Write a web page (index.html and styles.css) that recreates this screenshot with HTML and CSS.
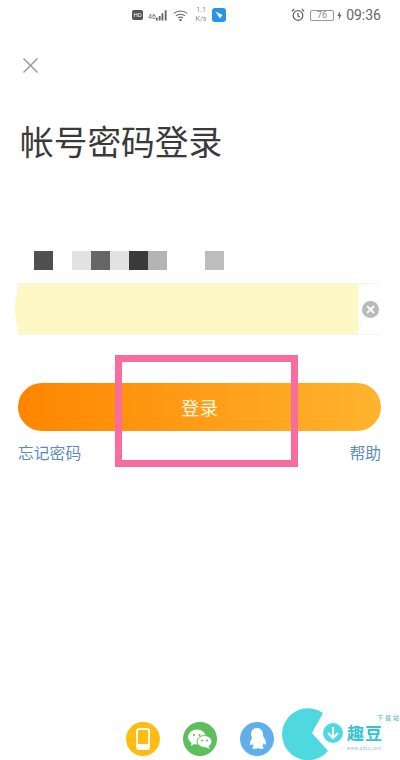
FILE: index.html
```html
<!doctype html>
<html lang="zh-CN">
<head>
    <meta charset="utf-8">
    <title>帐号密码登录</title>
    <link rel="stylesheet" href="styles.css">
</head>
<body>
<main class="page">
    <div class="status">
        <div class="status-left">
            <span class="hd">HD</span>
            <span class="net">46</span>
            <svg class="signal" width="13" height="12" viewBox="0 0 14 12"><path d="M1 9h2v3H1zM4 7h2v5H4zM7 4h2v8H7zM10.500 1h2v11h-2z" fill="#666"/></svg>
            <svg class="wifi" width="15" height="13" viewBox="0 0 18 14" fill="none" stroke="#666" stroke-width="1.300"><path d="M1 4.500c4.500-4 11.500-4 16 0M3.500 7.500c3-2.700 8-2.700 11 0M6 10.200c1.700-1.400 4.300-1.400 6 0"/><circle cx="9" cy="12.500" r=".8" fill="#666"/></svg>
            <span class="speed">1.1<br>K/s</span>
            <svg class="app" width="14" height="14" viewBox="0 0 14 14"><rect width="14" height="14" rx="3" fill="#2a94e8"/><path d="M3.500 3.500l7 3.500-2.500 3.500z" fill="#fff"/></svg>
        </div>
        <div class="status-right">
            <svg class="alarm" width="14" height="14" viewBox="0 0 14 14" fill="none" stroke="#666" stroke-width="1.300"><circle cx="7" cy="7.500" r="4.800"/><path d="M7 5v3l2 1M1 3.200L3.200 1M13 3.200L10.800 1"/></svg>
            <span class="battery">76</span>
            <svg class="bolt" width="5" height="9" viewBox="0 0 6 10"><path d="M3.500 0L.5 5.500h2L2 10l3.500-6h-2z" fill="#666"/></svg>
            <span class="clock">09:36</span>
        </div>
    </div>

    <svg class="close" width="15" height="15" viewBox="0 0 15 15" fill="none" stroke="#9a9a9a" stroke-width="1.500"><path d="M.5.500l14 14M14.500.500l-14 14"/></svg>

    <h1 class="title">帐号密码登录</h1>

    <div class="masked">
        <span class="px px-dark"></span>
        <span class="px px-none"></span>
        <span class="px px-pale"></span>
        <span class="px px-mid"></span>
        <span class="px px-pale"></span>
        <span class="px px-black"></span>
        <span class="px px-grey"></span>
        <span class="px px-none"></span>
        <span class="px px-none"></span>
        <span class="px px-soft"></span>
    </div>

    <div class="field">
        <div class="field-fill"></div>
        <svg class="clear" width="17" height="17" viewBox="0 0 17 17"><circle cx="8.500" cy="8.500" r="8.500" fill="#b9b9b9"/><path d="M5 5l7 7M12 5l-7 7" stroke="#fff" stroke-width="1.800"/></svg>
    </div>

    <button class="login">登录</button>

    <div class="links">
        <span>忘记密码</span>
        <span>帮助</span>
    </div>

    <div class="socials">
        <span class="social social-phone">
            <svg width="14" height="22" viewBox="0 0 14 22"><rect x="1" y="1" width="12" height="20" rx="2" fill="none" stroke="#fff" stroke-width="1.800"/><path d="M1 16h12v3a2 2 0 0 1-2 2H3a2 2 0 0 1-2-2z" fill="#fff"/></svg>
        </span>
        <span class="social social-wechat">
            <svg width="24" height="20" viewBox="0 0 24 20"><ellipse cx="9" cy="8" rx="9" ry="7.500" fill="#fff"/><path d="M4 12l-1 5 5-3z" fill="#fff"/><ellipse cx="16.500" cy="12.500" rx="7.500" ry="6" fill="#fff" stroke="#5cbf5c"/><path d="M20 16l2 4-5-2z" fill="#fff"/><circle cx="6" cy="6" r="1.100" fill="#5cbf5c"/><circle cx="11.500" cy="6" r="1.100" fill="#5cbf5c"/><circle cx="14" cy="11.500" r="1" fill="#5cbf5c"/><circle cx="19" cy="11.500" r="1" fill="#5cbf5c"/></svg>
        </span>
        <span class="social social-qq">
            <svg width="20" height="22" viewBox="0 0 20 22"><path d="M10 0c4 0 6 3 6 7 0 1 .5 2 1.500 3.500 1.500 2.500 2 5 1 6-.7.500-1.500-.5-2-1.500 0 1.500-.8 2.500-1.500 3.200 1.500.5 2 1.300 1.500 2-.5.800-3 .8-4.500.3-.8-.3-1.200-.3-2 0-1.500.5-4 .5-4.500-.3-.5-.7 0-1.500 1.500-2C6.300 18 5.500 17 5.500 15.500c-.5 1-1.300 2-2 1.500-1-1-.5-3.500 1-6C5.500 9 4 8 4 7c0-4 2-7 6-7z" fill="#fff"/></svg>
        </span>
    </div>

    <div class="frame"></div>

    <div class="mark">
        <svg class="mark-pac" width="54" height="54" viewBox="0 0 54 54"><path d="M41 6A26 26 0 1 0 46 44L30 26z" fill="#4fd8e0"/></svg>
        <svg class="mark-arrow" width="20" height="20" viewBox="0 0 20 20"><circle cx="10" cy="10" r="10" fill="#4fd8e0"/><path d="M10 4v11M5 10l5 5 5-5" fill="none" stroke="#fff" stroke-width="2"/></svg>
        <span class="mark-name">趣豆</span>
        <span class="mark-sub">下载站</span>
        <span class="mark-url">www.qdxz.com</span>
    </div>
</main>
</body>
</html>
```

FILE: styles.css
```css
* {
    box-sizing: border-box;
}

html, body {
    margin: 0;
    background: #fff;
}

.page {
    position: relative;
    width: 400px;
    height: 760px;
    overflow: hidden;
    padding: 0 19px 0 18px;
    font-family: "Noto Sans CJK SC", "Liberation Sans", sans-serif;
    color: #333;
}

/* status bar */
.status {
    display: flex;
    justify-content: space-between;
    align-items: center;
    height: 30px;
    margin-left: 114px;
    color: #666;
    font-family: Roboto, sans-serif;
}

.status-left, .status-right {
    display: flex;
    align-items: center;
}

.hd {
    width: 11px;
    height: 10px;
    margin-right: 5px;
    border-radius: 2px;
    background: #555;
    color: #fff;
    font-size: 6px;
    line-height: 10px;
    text-align: center;
}

.net {
    width: 7px;
    align-self: flex-start;
    margin: 7px 0 0;
    font-size: 7px;
    line-height: 8px;
}

.signal {
    margin-right: 5px;
}

.speed {
    width: 16px;
    margin: 0 3px 0 5px;
    font-size: 7px;
    line-height: 9px;
    text-align: center;
    color: #888;
}

.battery {
    width: 24px;
    height: 11px;
    margin: 0 3px 0 5px;
    border: 1px solid #999;
    border-radius: 2px;
    color: #888;
    font-size: 9px;
    line-height: 9px;
    text-align: center;
}

.bolt {
    margin-right: 4px;
}

.clock {
    font-size: 14px;
    color: #666;
}

.close {
    display: block;
    margin: 28px 0 0 5px;
}

.title {
    margin: 48px 0 0 2px;
    font-size: 33.700px;
    font-weight: 400;
    line-height: 40px;
    color: #3a3a3a;
}

/* the account name is pixelated in the source */
.masked {
    display: flex;
    margin: 90px 0 0 16px;
}

.px {
    width: 19px;
    height: 19px;
}

.px-dark { background: #505050; }
.px-pale { background: #e2e2e2; }
.px-mid { background: #666; }
.px-black { background: #3a3a3a; }
.px-grey { background: #b4b4b4; }
.px-soft { background: #bdbdbd; }

.field {
    display: flex;
    align-items: center;
    height: 52px;
    margin-top: 13px;
    border-top: 1px solid #f3f3f3;
    border-bottom: 1px solid #f3f3f3;
}

.field-fill {
    position: relative;
    width: 340px;
    height: 100%;
    background: #fef8c4;
}

/* the highlight bulges a little past its left edge */
.field-fill::before {
    content: "";
    position: absolute;
    left: -3px;
    top: 6px;
    bottom: 6px;
    width: 8px;
    border-radius: 50%;
    background: #fef8c4;
}

.clear {
    margin-left: 4px;
}

.login {
    display: block;
    width: 100%;
    height: 48px;
    margin-top: 48px;
    border: 0;
    border-radius: 24px;
    background: linear-gradient(90deg, #ff8500, #ffb42e);
    color: #fff6e0;
    font-family: inherit;
    font-size: 18.500px;
}

.links {
    display: flex;
    justify-content: space-between;
    margin-top: 11px;
    font-size: 15.800px;
    line-height: 22px;
    color: #5c8db5;
}

.socials {
    display: flex;
    gap: 23px;
    margin: 258px 0 0 108px;
}

.social {
    display: flex;
    align-items: center;
    justify-content: center;
    width: 34px;
    height: 34px;
    border-radius: 50%;
}

.social-phone { background: #ffbd14; }
.social-wechat { background: #5cbf5c; }
.social-qq { background: #5fb0ea; }

/* annotation drawn over the screenshot */
.frame {
    position: absolute;
    left: 115px;
    top: 355px;
    width: 183px;
    height: 112px;
    border: 7px solid #f76d9b;
}

/* watermark in the bottom corner */
.mark {
    position: absolute;
    left: 282px;
    top: 707px;
    width: 118px;
    height: 53px;
    white-space: nowrap;
}

.mark-pac {
    position: absolute;
    left: 0;
    top: 0;
}

.mark-arrow {
    position: absolute;
    left: 41px;
    top: 16px;
}

.mark-name {
    position: absolute;
    left: 65px;
    top: 14px;
    font-size: 17px;
    font-weight: 700;
    line-height: 24px;
    letter-spacing: 1px;
    color: #35c4d0;
}

.mark-sub {
    position: absolute;
    left: 95px;
    top: 7px;
    font-size: 6px;
    line-height: 8px;
    letter-spacing: 2px;
    color: #4aa8b0;
}

.mark-url {
    position: absolute;
    left: 65px;
    top: 38px;
    font-size: 4px;
    line-height: 6px;
    letter-spacing: .5px;
    color: #7fb8c0;
}
```
